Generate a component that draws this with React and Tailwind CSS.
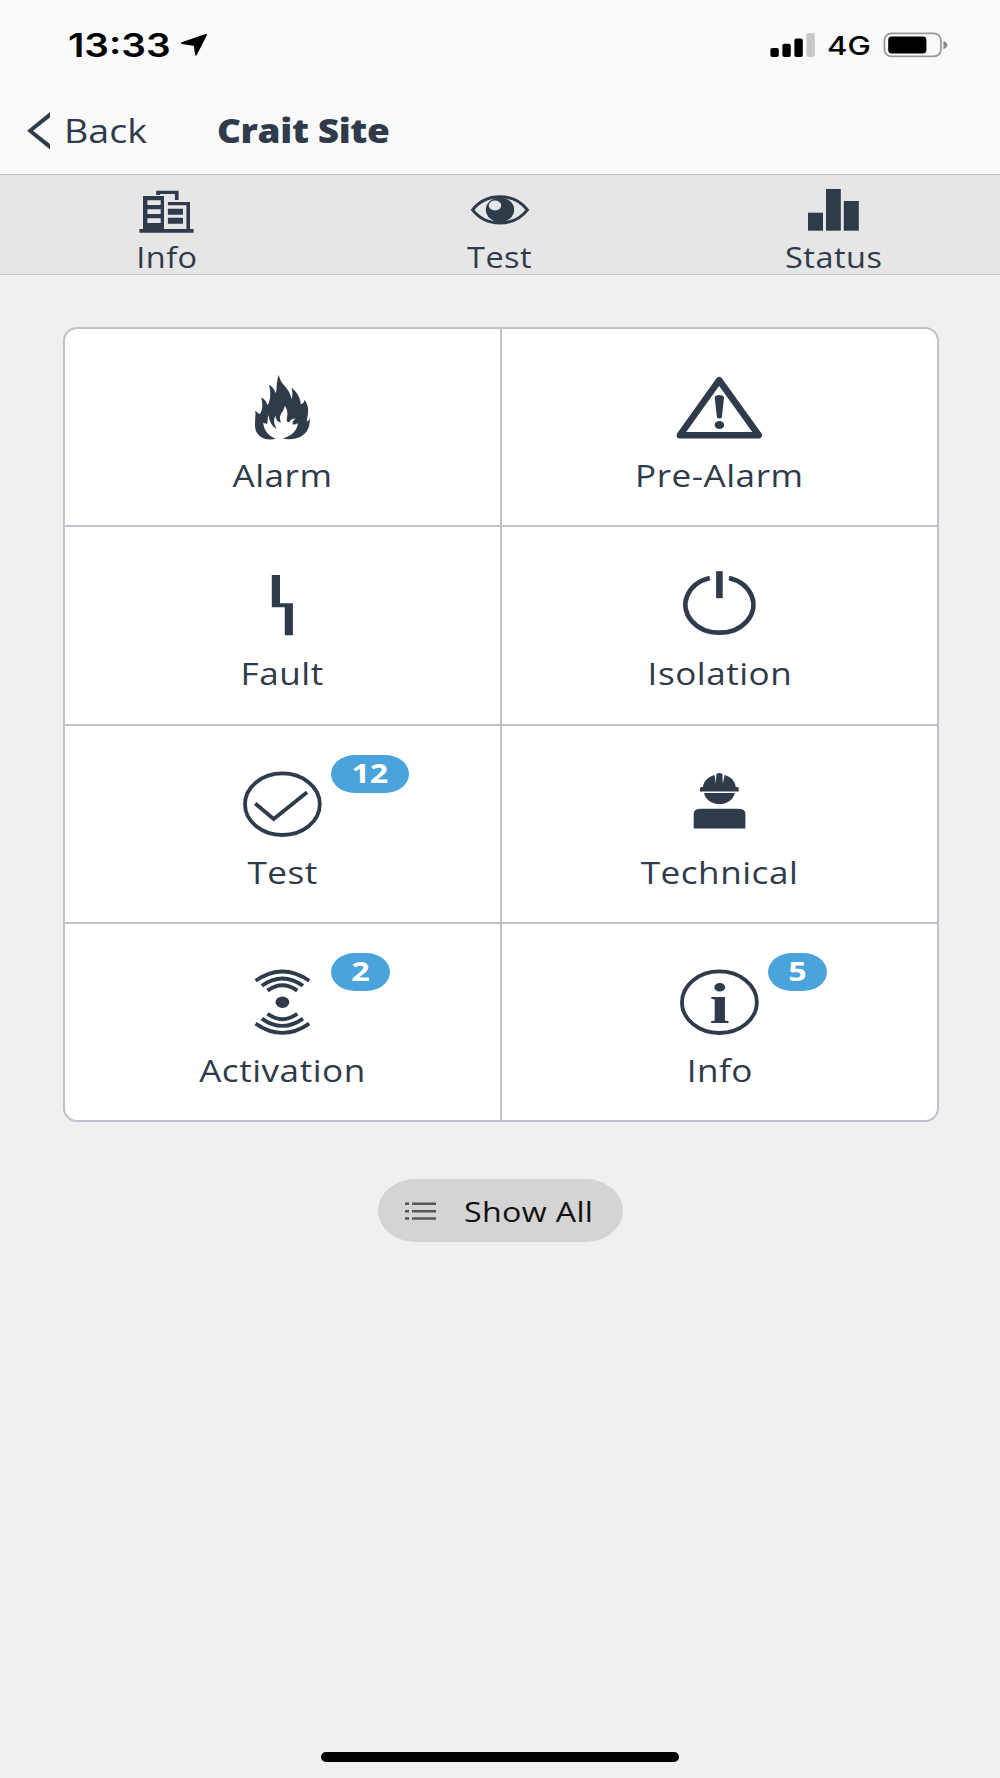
import React from 'react';
import clsx from 'clsx';

const NAVY = '#2f3b4a';

const Icon = ({ children, viewBox = '0.8 -0.2 88 70' }) => (
  <svg width="88" height="70" viewBox={viewBox} fill={NAVY} className="block overflow-visible">
    {children}
  </svg>
);

const FlameIcon = () => (
  <Icon viewBox="2.4 -2.4 264 210">
    <path d="M122 0C124 17 134 27 145 40C153 50 158 61 160 73C164 61 163 50 160 38C172 49 185 62 188 88C195 87 198 82 199 75C207 86 212 99 209 117C208 126 206 136 206 141C210 138 213 134 214 128C217 154 208 171 193 182C177 193 154 196 133 191C161 183 177 167 179 145C173 148 168 150 164 149C161 143 166 134 173 130C165 131 157 134 153 142C147 143 145 140 146 132C149 116 148 105 140 93C137 110 126 116 125 129C125 136 128 140 128 143C119 142 112 134 112 122C105 134 107 147 115 162C102 155 94 142 91 121C87 127 90 141 87 146C82 148 78 145 75 143C77 168 91 183 113 192C84 198 63 189 54 170C46 151 54 126 51 108C56 110 59 116 64 118C73 109 75 90 69 68C79 72 84 80 88 91C97 78 99 52 92 30C103 35 109 44 112 55C118 43 113 21 122 0Z" />
  </Icon>
);

const WarningIcon = () => (
  <Icon viewBox="0.8 -1.2 88 70">
    <path d="M44 5L83.5 60H4.7Z" fill="none" stroke={NAVY} strokeWidth="6.6" strokeLinejoin="round" />
    <path d="M39.5 22.5C39.5 19 48.8 19 48.8 22.5L46.6 42.5Q44.2 44 41.8 42.5Z" />
    <ellipse cx="44.2" cy="49.8" rx="4.8" ry="4" />
  </Icon>
);

const FaultIcon = () => (
  <Icon>
    <path d="M33.6 2.8H41.8V31H54.7V63H46.6V35H33.6Z" />
  </Icon>
);

const PowerIcon = () => (
  <Icon>
    <path d="M34.6 5.8A34 27.9 0 1 0 53.8 5.8" fill="none" stroke={NAVY} strokeWidth="4.7" />
    <rect x="40.9" y="-1" width="6.6" height="27" />
  </Icon>
);

const CheckIcon = () => (
  <Icon>
    <ellipse cx="44.2" cy="33" rx="37.4" ry="30.8" fill="none" stroke={NAVY} strokeWidth="3.8" />
    <path d="M17 32.3L35.5 47.8L68.8 21" fill="none" stroke={NAVY} strokeWidth="3.8" />
  </Icon>
);

const WorkerIcon = () => (
  <Icon>
    <path d="M24.8 20.2V17Q25 15.5 27.8 15.5C28.5 10 33 5.5 39.4 3.9L40.6 12.5L41.2 3Q44.2 0.4 47.2 3L47.6 12.5L49.4 3.9C55.5 5.5 60 10 60.5 15.5Q63.5 15.5 63.5 17V20.2Z" />
    <path d="M28.8 21.7H59.5C58.5 28 52 32.8 44.2 32.8C36.4 32.8 30 28 28.8 21.7Z" />
    <path d="M18.5 57.2V42.5Q18.5 37.5 26 37.5H62.7Q70.2 37.5 70.2 42.5V57.2Z" />
  </Icon>
);

const ActivationIcon = () => (
  <Icon>
    <g fill="none" stroke={NAVY} strokeWidth="3.8">
      <path d="M17.4 11.6Q44.2 -7 71 11.6" />
      <path d="M23.6 16.6Q44.2 2 64.8 16.6" />
      <path d="M29.3 21.4Q44.2 10.6 59.1 21.4" />
      <path d="M17.4 54.4Q44.2 73 71 54.4" />
      <path d="M23.6 49.4Q44.2 64 64.8 49.4" />
      <path d="M29.3 44.6Q44.2 55.4 59.1 44.6" />
    </g>
    <ellipse cx="44.2" cy="33" rx="6.9" ry="5.7" />
  </Icon>
);

const InfoIcon = () => (
  <Icon>
    <ellipse cx="44.2" cy="33" rx="37.4" ry="30.8" fill="none" stroke={NAVY} strokeWidth="3.8" />
    <text
      transform="translate(44.4 53.5) scale(1.27 1)"
      textAnchor="middle"
      fontSize="57"
      className="font-['Liberation_Serif',serif] font-bold"
    >
      i
    </text>
  </Icon>
);

const BuildingIcon = () => (
  <svg width="56" height="44" viewBox="0 0 56 44" fill={NAVY}>
    <path d="M0.4 40H54.6V43.7H0.4Z" />
    <path fillRule="evenodd" d="M4 7H25V41H4ZM8.4 11.3V16H21.7V11.3ZM8.4 20.3V25H21.7V20.3ZM8.4 29.3V34H21.7V29.3Z" />
    <path d="M17.2 6V1.7H39.6V11H35.9V5H21V6Z" />
    <path d="M28.9 13H51V41H47.4V16.3H28.9Z" />
    <path d="M28.9 19.7H44V25.7H28.9ZM28.9 28.7H44V34.7H28.9Z" />
  </svg>
);

const EyeIcon = () => (
  <svg width="60" height="44" viewBox="0 0 60 44" fill={NAVY}>
    <path
      d="M2.6 20.8C9 12.5 18.5 7.7 30 7.7S51 12.5 57.4 20.8C51 29 41.5 33.9 30 33.9S9 29 2.6 20.8Z"
      fill="none"
      stroke={NAVY}
      strokeWidth="3"
    />
    <ellipse cx="30" cy="20.8" rx="14.2" ry="12.3" />
    <ellipse cx="25" cy="16.5" rx="6.2" ry="5" fill="#e6e6e6" />
  </svg>
);

const BarsIcon = () => (
  <svg width="51" height="44" viewBox="0 0 51 44" fill={NAVY}>
    <rect x="0" y="23.7" width="15" height="18" />
    <rect x="18" y="0" width="14.8" height="41.7" />
    <rect x="35.8" y="12" width="15" height="29.7" />
  </svg>
);

const tabs = [
  { label: 'Info', icon: BuildingIcon },
  { label: 'Test', icon: EyeIcon },
  { label: 'Status', icon: BarsIcon },
];

const categories = [
  { label: 'Alarm', icon: FlameIcon },
  { label: 'Pre-Alarm', icon: WarningIcon },
  { label: 'Fault', icon: FaultIcon },
  { label: 'Isolation', icon: PowerIcon },
  { label: 'Test', icon: CheckIcon, count: 12 },
  { label: 'Technical', icon: WorkerIcon },
  { label: 'Activation', icon: ActivationIcon, count: 2 },
  { label: 'Info', icon: InfoIcon, count: 5 },
];

const StatusBar = () => (
  <div className="flex h-[90px] items-center justify-between pr-[52px] pl-[68px] font-[Inter,sans-serif] text-black">
    <div className="flex items-center">
      <span className="w-[113px] origin-left scale-x-[1.21] pt-0.5 text-[32px] font-semibold">13:33</span>
      <svg width="27" height="22" viewBox="0 0 27 22" className="block">
        <path d="M1 9.2L25 0.8L15 20.6L13.6 11Z" stroke="black" strokeWidth="1.8" strokeLinejoin="round" />
      </svg>
    </div>
    <div className="flex items-center">
      <svg width="45" height="24" viewBox="0 0 45 24">
        <rect x="0.4" y="15" width="8.4" height="9" rx="2" />
        <rect x="12.4" y="10.8" width="8.4" height="13.2" rx="2" />
        <rect x="24.4" y="5.5" width="8.4" height="18.5" rx="2" />
        <rect x="36.4" y="0" width="8.4" height="24" rx="2" fill="#c8c8c8" />
      </svg>
      <span className="ml-3 w-[56px] origin-left scale-x-[1.2] pt-px text-[26px] font-medium">4G</span>
      <svg width="65" height="26" viewBox="0 0 65 26">
        <rect x="1.4" y="1.4" width="56.5" height="23" rx="7" fill="none" stroke="#999" strokeWidth="1.8" />
        <rect x="5.2" y="4.6" width="38.2" height="16.8" rx="3.5" />
        <path d="M60.4 9Q64.4 10.5 64.4 13T60.4 17.2Z" fill="#888" />
      </svg>
    </div>
  </div>
);

const App = () => {
  return (
    <div className="flex h-[1778px] w-[1000px] flex-col bg-[#f0f0f0] font-['Open_Sans',sans-serif] text-[#2f3b4a]">
      <header className="h-[175px] border-b border-[#bfc1cc] bg-[#fafafa]">
        <StatusBar />
        <div className="flex h-[82px] items-center pl-[26px]">
          <button className="flex w-[191px] items-center">
            <svg width="24" height="38" viewBox="0 0 24 38" className="mr-[14px]">
              <path d="M24 0V5.4L7 18.7L24 32V37.4L1 18.7Z" fill={NAVY} />
            </svg>
            <span className="origin-left scale-x-[1.14] text-[33px]">Back</span>
          </button>
          <h1 className="origin-left scale-x-[1.12] text-[33px] font-extrabold tracking-[-0.01em]">Crait Site</h1>
        </div>
      </header>

      <nav className="grid h-[100px] grid-cols-3 border-b border-[#c3c5cf] bg-[#e6e6e6]">
        {tabs.map(({ label, icon: TabIcon }) => (
          <button key={label} className="flex flex-col items-center pt-3.5">
            <TabIcon />
            <span className="mt-1.5 scale-x-[1.14] text-[28.5px] leading-9 tracking-[0.015em]">{label}</span>
          </button>
        ))}
      </nav>

      <main className="flex flex-1 flex-col items-center pt-[52px]">
        {/* Event categories, gaps show through as divider lines */}
        <div className="ml-0.5 grid h-[795px] w-[876px] grid-cols-2 grid-rows-4 gap-0.5 overflow-hidden rounded-[14px] border-2 border-[#bfc1cc] bg-[#bfc1cc]">
          {categories.map(({ label, icon: CategoryIcon, count }, index) => (
            <button key={index} className="flex flex-col items-center bg-white pt-[45px]">
              <div className="relative">
                <CategoryIcon />
                {count && (
                  <span
                    className={clsx(
                      'absolute -top-4 left-[92px] flex h-[38px] items-center justify-center rounded-[24px/19px] bg-[#4ba3db] text-[26px] font-bold text-white',
                      count > 9 ? 'w-[78px]' : 'w-[59px]'
                    )}
                  >
                    <span className="scale-x-[1.24]">{count}</span>
                  </span>
                )}
              </div>
              <span className="mt-[11px] scale-x-[1.15] text-[30.5px] leading-10 tracking-[0.015em]">{label}</span>
            </button>
          ))}
        </div>

        <button className="mt-[57px] flex h-[63px] w-[245px] items-center rounded-[38px/32px] bg-[#d4d4d4] pl-[27px] text-[#111]">
          <svg width="32" height="20" viewBox="0 0 32 20" fill="#555">
            <path d="M0 1.5H4V4H0ZM7 1.5H31V4H7ZM0 8.9H4V11.4H0ZM7 8.9H31V11.4H7ZM0 16.3H4V18.8H0ZM7 16.3H31V18.8H7Z" />
          </svg>
          <span className="ml-[27px] origin-left scale-x-[1.15] text-[28px] tracking-[0.01em]">Show All</span>
        </button>
      </main>

      <div className="mx-auto mb-4 h-[10px] w-[358px] rounded-full bg-black" />
    </div>
  );
};

export default App;
